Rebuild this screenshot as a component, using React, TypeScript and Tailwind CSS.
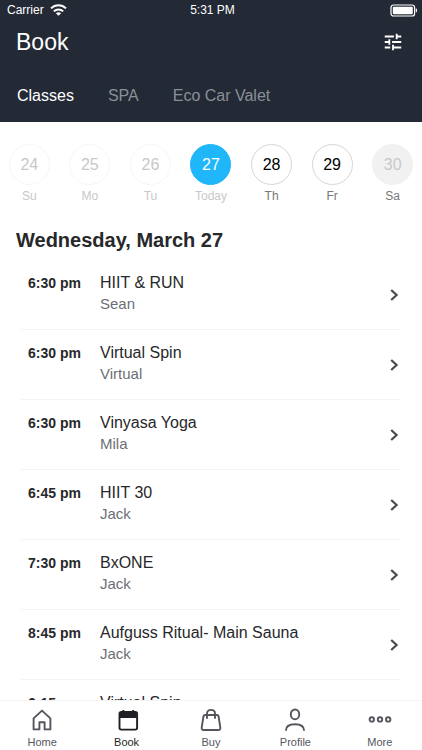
import type { ReactNode } from 'react';
import { clsx } from 'clsx';

type DayState = 'past' | 'today' | 'open' | 'closed';

const tabs = ['Classes', 'SPA', 'Eco Car Valet'];

const days: { date: number; label: string; state: DayState }[] = [
  { date: 24, label: 'Su', state: 'past' },
  { date: 25, label: 'Mo', state: 'past' },
  { date: 26, label: 'Tu', state: 'past' },
  { date: 27, label: 'Today', state: 'today' },
  { date: 28, label: 'Th', state: 'open' },
  { date: 29, label: 'Fr', state: 'open' },
  { date: 30, label: 'Sa', state: 'closed' },
];

const dayStyles: Record<DayState, string> = {
  past: 'border-[#f6f6f6] text-[#c8c8c8]',
  today: 'border-[#1fb6fa] bg-[#1fb6fa] text-white',
  open: 'border-[#d6d6d6] text-black',
  closed: 'border-[#f1f1f1] bg-[#f1f1f1] text-[#c8c8c8]',
};

const classes = [
  { time: '6:30 pm', name: 'HIIT & RUN', host: 'Sean' },
  { time: '6:30 pm', name: 'Virtual Spin', host: 'Virtual' },
  { time: '6:30 pm', name: 'Vinyasa Yoga', host: 'Mila' },
  { time: '6:45 pm', name: 'HIIT 30', host: 'Jack' },
  { time: '7:30 pm', name: 'BxONE', host: 'Jack' },
  { time: '8:45 pm', name: 'Aufguss Ritual- Main Sauna', host: 'Jack' },
  { time: '6:15 am', name: 'Virtual Spin', host: 'Virtual' },
];

const navItems: { label: string; icon: ReactNode }[] = [
  {
    label: 'Home',
    icon: <path d="M3.6 10.4 12 2.6l8.4 7.8v11h-5.8v-7.2H9.4v7.2H3.6z" />,
  },
  {
    label: 'Book',
    icon: (
      <>
        <rect x="4.5" y="4" width="17.6" height="17.6" rx="1.8" />
        <path d="M5 4h16.6v6H5z" fill="currentColor" stroke="none" />
        <path d="M8.4 2v2.4M18.2 2v2.4" />
      </>
    ),
  },
  {
    label: 'Buy',
    icon: (
      <>
        <path d="M6.2 7h11.6c1 0 1.6.5 1.8 1.5l1.7 11.1c.2 1.5-.5 2.4-2 2.4H4.7c-1.5 0-2.2-.9-2-2.4L4.400 8.500C4.600 7.500 5.200 7 6.200 7z" />
        <path d="M8 10.800V5.500C8 3.200 9.500 1.900 12 1.900s4 1.300 4 3.600v5.300" />
      </>
    ),
  },
  {
    label: 'Profile',
    icon: (
      <>
        <ellipse cx="12" cy="6.400" rx="4.200" ry="4.900" />
        <path d="M2.900 22.700c0-4.300 3.100-6.500 9.100-6.500s9.100 2.200 9.100 6.500" />
      </>
    ),
  },
  {
    label: 'More',
    icon: (
      <>
        <circle cx="3.8" cy="11.4" r="2.2" />
        <circle cx="12" cy="11.4" r="2.2" />
        <circle cx="20.2" cy="11.4" r="2.2" />
      </>
    ),
  },
];

function StatusBar() {
  return (
    <div className="grid h-5 grid-cols-3 items-center pr-1 pl-[7px] text-xs text-white">
      <div className="flex items-center gap-1.5">
        <span>Carrier</span>
        <svg viewBox="0 0 17 12" className="h-3 w-[17px]" fill="none" stroke="currentColor" strokeWidth="2">
          <path d="M1 4.4c4.2-4.2 10.8-4.2 15 0" />
          <path d="M3.8 7.4c2.7-2.6 6.7-2.6 9.4 0" />
          <path d="M8.5 11.8 5.9 9.2c1.5-1.4 3.7-1.4 5.2 0z" fill="currentColor" stroke="none" />
        </svg>
      </div>
      <span className="text-center">5:31 PM</span>
      <svg viewBox="0 0 28 13" className="h-[13px] w-7 justify-self-end" fill="none">
        <rect x="1" y="1" width="23.6" height="11" rx="2.6" stroke="white" strokeWidth="1.2" />
        <rect x="2.8" y="2.8" width="20" height="7.4" rx="1" fill="white" />
        <path d="M25.8 4.3c1.8.6 1.8 3.8 0 4.4z" fill="white" />
      </svg>
    </div>
  );
}

function Header() {
  return (
    <header className="shrink-0 bg-[#232a36]">
      <StatusBar />
      <div className="flex h-11 items-center justify-between pr-[18px] pl-4">
        <h1 className="text-[23px] leading-7 text-white">Book</h1>
        <button type="button" aria-label="Filters" className="text-white">
          <svg viewBox="0 0 24 24" className="size-[22px]" fill="currentColor">
            <path d="M3 17v2h6v-2H3zM3 5v2h10V5H3zm10 16v-2h8v-2h-8v-2h-2v6h2zM7 9v2H3v2h4v2h2V9H7zm14 4v-2H11v2h10zm-6-4h2V7h4V5h-4V3h-2v6z" />
          </svg>
        </button>
      </div>
      <div className="flex h-[58px] items-center gap-[34px] px-[17px] pt-1.5">
        {tabs.map((tab, i) => (
          <button
            key={tab}
            type="button"
            className={clsx('text-base', i === 0 ? 'text-white' : 'text-[#8b8f98]')}
          >
            {tab}
          </button>
        ))}
      </div>
    </header>
  );
}

function WeekStrip() {
  return (
    <div className="-mx-px grid grid-cols-7 pt-[22px]">
      {days.map(({ date, label, state }) => (
        <button key={date} type="button" className="flex flex-col items-center gap-[3px]">
          <span
            className={clsx(
              'flex size-[41px] items-center justify-center rounded-full border text-base',
              dayStyles[state],
            )}
          >
            {date}
          </span>
          <span
            className={clsx(
              'text-xs leading-4',
              state === 'past' || state === 'today' ? 'text-[#c8c8c8]' : 'text-[#777777]',
            )}
          >
            {label}
          </span>
        </button>
      ))}
    </div>
  );
}

export default function App() {
  return (
    <div className="flex h-dvh flex-col overflow-hidden bg-white font-['Liberation_Sans',Arial,sans-serif]">
      <Header />

      <main className="min-h-0 flex-1 overflow-y-auto [scrollbar-width:none]">
        <WeekStrip />
        <h2 className="px-4 pt-[22px] text-xl leading-7 font-bold text-[#27282a]">
          Wednesday, March 27
        </h2>

        <ul className="mr-[22px] ml-[21px] pt-1.5">
          {classes.map(({ time, name, host }, i) => (
            <li key={i} className="border-b border-[#f3f3f3]">
              <button type="button" className="flex h-[69px] w-full items-start pt-3 pl-[7px] text-left">
                <span className="w-[72px] shrink-0 text-sm leading-[22px] font-bold text-[#27282a]">
                  {time}
                </span>
                <span className="flex-1">
                  <span className="block text-base leading-[22px] text-[#27282a]">{name}</span>
                  <span className="block text-[15px] leading-5 text-[#6c6f75]">{host}</span>
                </span>
                <svg
                  viewBox="0 0 10 14"
                  className="mt-4 h-3.5 w-2.5 text-[#4a4b50]"
                  fill="none"
                  stroke="currentColor"
                  strokeWidth="2.2"
                >
                  <path d="m1.2 2 5.4 5-5.4 5" />
                </svg>
              </button>
            </li>
          ))}
        </ul>
      </main>

      <nav className="grid shrink-0 grid-cols-5 border-t border-[#f3f3f3] bg-white pt-[7px]">
        {navItems.map(({ label, icon }) => (
          <a
            key={label}
            href={`#${label.toLowerCase()}`}
            className={clsx(
              'flex flex-col items-center gap-1 pb-0.5 text-[11px] leading-3',
              label === 'Book' ? 'text-[#1f1f24]' : 'text-[#55565d]',
            )}
          >
            <svg
              viewBox="0 0 24 24"
              className="size-6"
              fill="none"
              stroke="currentColor"
              strokeWidth="1.9"
              strokeLinejoin="round"
            >
              {icon}
            </svg>
            {label}
          </a>
        ))}
      </nav>
    </div>
  );
}
